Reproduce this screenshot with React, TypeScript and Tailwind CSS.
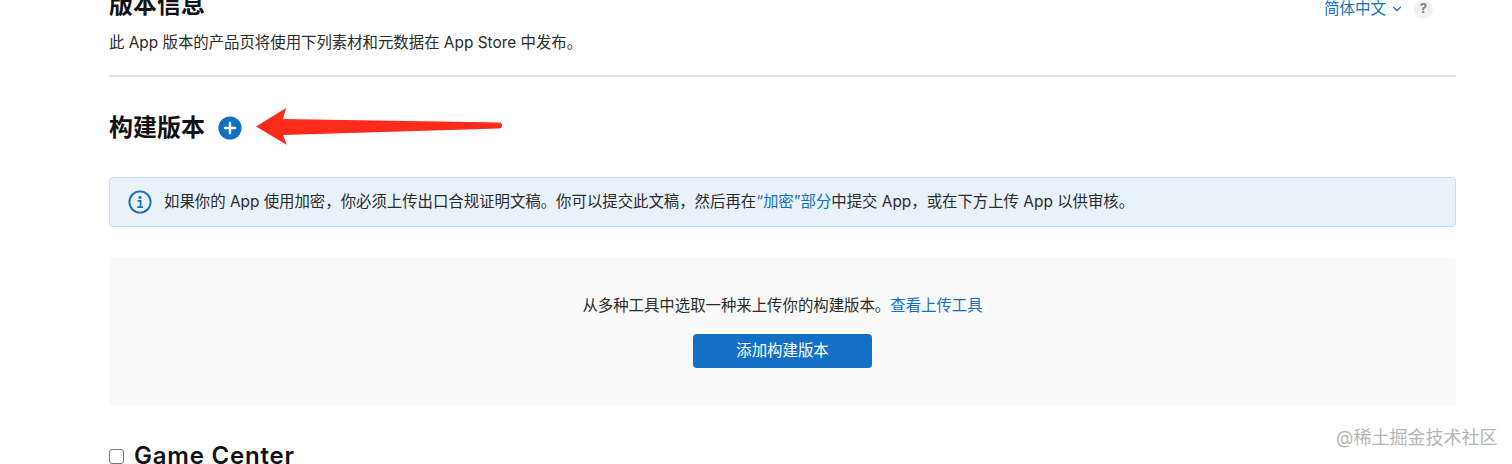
import { ChevronDown } from "lucide-react";

const cjk = "font-['Inter','Noto_Sans_CJK_SC',sans-serif]";

function InfoIcon() {
  return (
    <svg width="24" height="24" viewBox="0 0 24 24" fill="none" className="shrink-0">
      <circle cx="12" cy="12" r="10.6" stroke="#1470c4" strokeWidth="1.9" />
      <circle cx="12" cy="7.4" r="1.5" fill="#1470c4" />
      <path d="M9.6 10.8h3v6.2M9.2 17.2h5.8" stroke="#1470c4" strokeWidth="1.7" />
    </svg>
  );
}

function AddIcon() {
  return (
    <svg width="24" height="24" viewBox="0 0 24 24" className="shrink-0">
      <circle cx="12" cy="12" r="11.6" fill="#1470c4" />
      <path d="M12 7v10M7 12h10" stroke="#fff" strokeWidth="2.4" strokeLinecap="round" />
    </svg>
  );
}

export default function App() {
  return (
    <div className={`relative h-[464px] w-[1512px] overflow-hidden bg-white text-[#2a2a2c] ${cjk}`}>
      <div className="pl-[109px] pr-[56px]">
        {/* Cabecera cortada por arriba */}
        <div className="-mt-[13px] flex h-[90px] flex-col border-b-2 border-[#e2e2e4]">
          <div className="flex items-start justify-between">
            <h1 className="text-[24px] leading-[36px] font-bold text-[#111]">版本信息</h1>
            <div className="mr-[23px] flex items-center pt-[8px] text-[#1470c4]">
              <span className="text-[15.5px] leading-[28px]">简体中文</span>
              <ChevronDown className="ml-[4px] size-[14px]" strokeWidth={2} />
              <span className="ml-[10px] flex size-[19px] items-center justify-center rounded-full bg-[#f1f1f2] text-[13px] font-bold text-[#7d7d80]">?</span>
            </div>
          </div>
          <p className="mt-[8px] text-[15.4px] leading-[24px]">此 App 版本的产品页将使用下列素材和元数据在 App Store 中发布。</p>
        </div>

        {/* Título de la sección */}
        <div className="mt-[33px] flex h-[36px] items-center gap-[13px]">
          <h2 className="text-[24px] leading-[36px] font-bold text-[#111]">构建版本</h2>
          <AddIcon />
        </div>

        <div className="mt-[31px] flex h-[50px] items-center gap-[12px] rounded-[4px] border border-[#c6dcef] bg-[#e9f2fa] pl-[18px] text-[15.4px]">
          <InfoIcon />
          <p>
            如果你的 App 使用加密，你必须上传出口合规证明文稿。你可以提交此文稿，然后再在<span className="text-[#1470c4]">“加密”部分</span>中提交 App，或在下方上传 App 以供审核。
          </p>
        </div>

        <div className="mt-[30px] flex h-[149px] flex-col items-center rounded-[4px] bg-[#fafafa] pt-[37px]">
          <p className="text-[15.4px] leading-[24px]">
            从多种工具中选取一种来上传你的构建版本。<span className="text-[#1470c4]">查看上传工具</span>
          </p>
          <button className="mt-[16px] h-[34px] w-[179px] rounded-[4px] bg-[#1470c4] text-[15.4px] text-white">添加构建版本</button>
        </div>

        <div className="mt-[34px] flex items-center gap-[10px]">
          <span className="size-[15px] rounded-[3px] border border-[#77777a] bg-white" />
          <h2 className="text-[24px] leading-[32px] font-semibold tracking-[0.8px] text-[#111]">Game Center</h2>
        </div>
      </div>

      {/* Flecha roja de anotación */}
      <svg className="pointer-events-none absolute top-0 left-0" width="520" height="160" viewBox="0 0 520 160">
        <path
          d="M256 126.5 286 108 283 119 499 122.5a3 3 0 0 1 0 6L283 135 287 145Z"
          fill="#fc2b1c"
        />
      </svg>

      <span className="absolute top-[428px] left-[1336px] text-[18px] leading-[20px] text-[#b5b5b5]">@稀土掘金技术社区</span>
    </div>
  );
}
